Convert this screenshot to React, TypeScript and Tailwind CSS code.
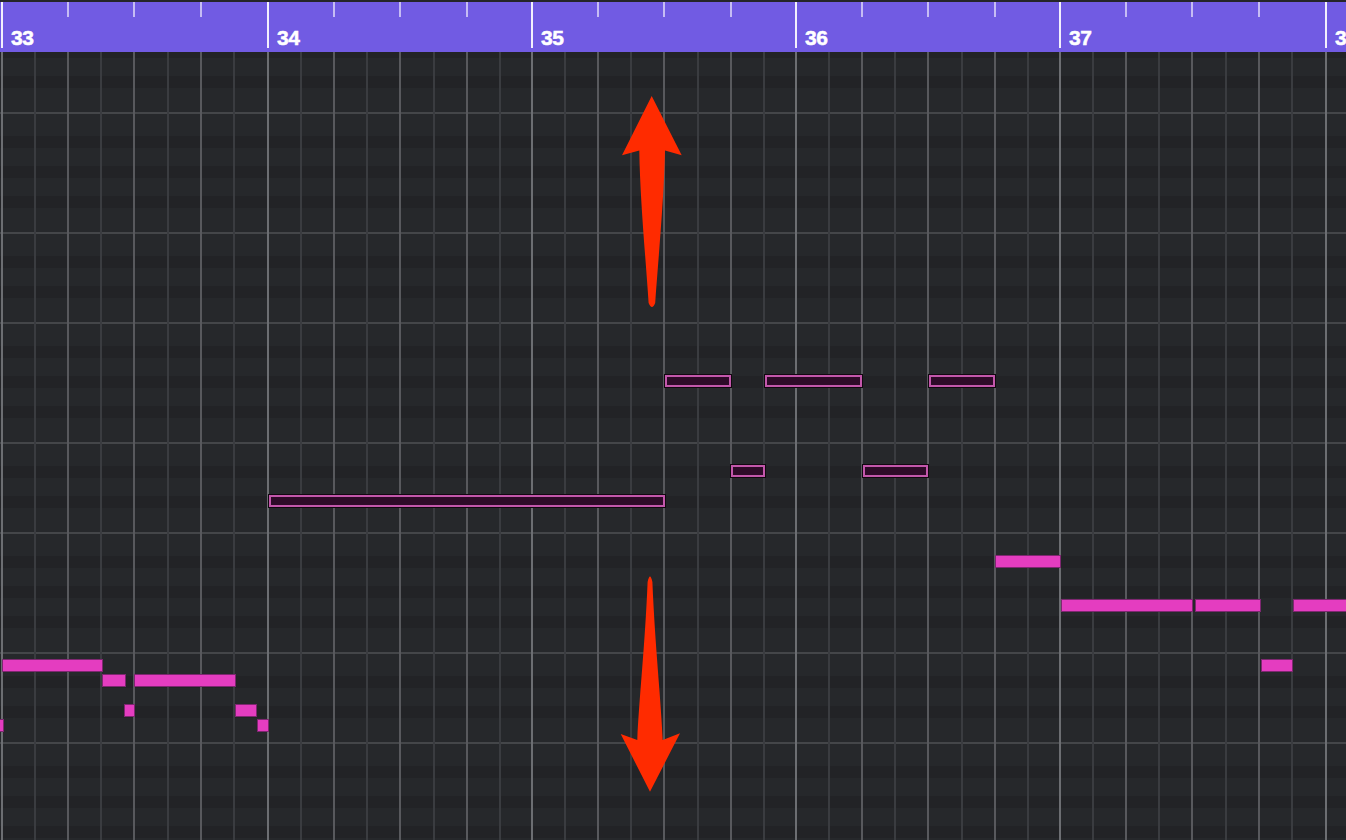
import React from "react";

type Kind = "bar" | "beat" | "eighth";
type VLine = { x: number; kind: Kind };

const BARS = [2, 268, 532, 796, 1060, 1326, 1591];
const LABELS = [33, 34, 35, 36, 37, 38];

const vlines: VLine[] = [];
for (let b = 0; b < BARS.length - 1; b++) {
  for (let j = 0; j < 8; j++) {
    vlines.push({
      x: BARS[b] + Math.round(j * 33.1),
      kind: j === 0 ? "bar" : j % 2 === 0 ? "beat" : "eighth",
    });
  }
}
vlines.push({ x: BARS[BARS.length - 1], kind: "bar" });

type Band = { h: number; dark: boolean; line?: boolean };
const SEG_A: Band[] = [
  { h: 24, dark: false, line: true },
  { h: 12, dark: true },
  { h: 18, dark: false },
  { h: 12, dark: true },
  { h: 24, dark: false },
];
const SEG_B: Band[] = [
  { h: 24, dark: false, line: true },
  { h: 12, dark: true },
  { h: 18, dark: false },
  { h: 12, dark: true },
  { h: 18, dark: false },
  { h: 12, dark: true },
  { h: 24, dark: false },
];
const bands: Band[] = [
  { h: 6, dark: true },
  { h: 18, dark: false },
  { h: 12, dark: true },
  { h: 24, dark: false },
  ...SEG_B,
  ...SEG_A,
  ...SEG_B,
  ...SEG_A,
  ...SEG_B,
  ...SEG_A,
  ...SEG_B,
];

// [left, top, width]
const PINK: [number, number, number][] = [
  [2, 659, 101],
  [102, 674, 24],
  [134, 674, 102],
  [124, 704, 11],
  [235, 704, 22],
  [-6, 719, 10],
  [257, 719, 12],
  [995, 555, 66],
  [1061, 599, 132],
  [1195, 599, 66],
  [1293, 599, 60],
  [1261, 659, 32],
];

const SELECTED: [number, number, number][] = [
  [664, 374, 68],
  [764, 374, 99],
  [928, 374, 68],
  [730, 464, 36],
  [862, 464, 67],
  [268, 494, 398],
];

const lineColor: Record<Kind, string> = {
  bar: "border-[#6c6e72]",
  beat: "border-[#58595d]",
  eighth: "border-[#3a3c40]",
};

function Ruler() {
  const beats = vlines.filter((l) => l.kind !== "eighth");
  let barIdx = 0;
  return (
    <div className="flex h-[50px] shrink-0 overflow-hidden bg-[#715be3]">
      <div className="w-[1px] shrink-0" />
      {beats.map((l, i) => {
        const next = beats[i + 1] ? beats[i + 1].x : l.x + 66;
        const isBar = l.kind === "bar";
        const label = isBar ? LABELS[barIdx++] : null;
        return (
          <div key={i} className="flex shrink-0 items-start" style={{ width: next - l.x }}>
            {isBar ? (
              <div className="h-[46px] w-[2px] shrink-0 bg-[#f3f0fd]" />
            ) : (
              <div className="h-[15px] w-[2px] shrink-0 bg-[#c6bcf4]" />
            )}
            {label !== null && label !== undefined && (
              <span className="ml-[8px] mt-[25px] text-[21px] font-bold leading-none tracking-[-0.4px] text-white [-webkit-text-stroke:0.5px_white]">
                {label}
              </span>
            )}
          </div>
        );
      })}
    </div>
  );
}

function Grid() {
  return (
    <div className="relative flex-1 overflow-hidden">
      <div className="flex flex-col">
        {bands.map((b, i) => (
          <div
            key={i}
            className={
              "shrink-0 " +
              (b.dark
                ? "bg-[#222326]"
                : b.line
                ? "bg-[#26282b] border-t-2 border-[#444649]"
                : "bg-[#26282b]")
            }
            style={{ height: b.h }}
          />
        ))}
      </div>
      <div className="absolute inset-0 flex">
        <div className="w-[1px] shrink-0" />
        {vlines.slice(0, -1).map((l, i) => (
          <div
            key={i}
            className={"h-full shrink-0 border-l-2 " + lineColor[l.kind]}
            style={{ width: vlines[i + 1].x - l.x }}
          />
        ))}
      </div>
    </div>
  );
}

export default function App() {
  return (
    <div className="relative flex h-[840px] w-[1346px] flex-col overflow-hidden bg-[#26282b] font-['Liberation_Sans',Arial,sans-serif]">
      <div className="h-[2px] shrink-0 bg-[#252529]" />
      <Ruler />
      <Grid />

      <div className="pointer-events-none absolute inset-0">
        {PINK.map(([x, y, w], i) => (
          <div
            key={"p" + i}
            className="absolute h-[13px] border border-[#7e2770] bg-[#e43dc0]"
            style={{ left: x, top: y, width: w }}
          />
        ))}
        {SELECTED.map(([x, y, w], i) => (
          <div
            key={"s" + i}
            className="absolute h-[14px] border border-[#120810]"
            style={{ left: x, top: y, width: w }}
          >
            <div className="h-full w-full border-2 border-[#c357ab] bg-[#2f0b29]" />
          </div>
        ))}
      </div>

      <svg
        className="pointer-events-none absolute inset-0"
        width={1346}
        height={840}
        viewBox="0 0 1346 840"
      >
        <path
          fill="#ff2b00"
          d="M651.7 96 L681.7 155.3 L665 150.5 C 664 200, 658 262, 655.2 303 Q 652 311, 648.6 303 C 646 262, 640 200, 639.3 150.5 L 622 155.3 Z"
        />
        <path
          fill="#ff2b00"
          d="M647.6 582 Q 650 571, 652.4 582 C 655 645, 661 700, 662.7 740 L 680 733.3 L 650 791.7 L 620.7 734 L 637.3 740 C 639 700, 645 645, 647.6 582 Z"
        />
      </svg>
    </div>
  );
}
